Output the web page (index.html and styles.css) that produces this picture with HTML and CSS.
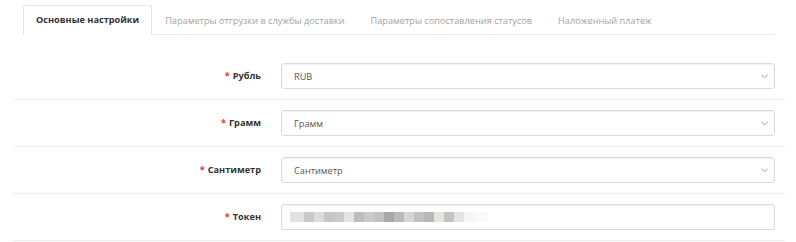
FILE: index.html
```html
<!DOCTYPE html>
<html lang="ru">
<head>
<meta charset="utf-8">
<title>Настройки</title>
<link rel="stylesheet" href="styles.css">
</head>
<body>
<div class="tabs">
  <div class="tab active">Основные настройки</div>
  <div class="tab">Параметры отгрузки в службы доставки</div>
  <div class="tab">Параметры сопоставления статусов</div>
  <div class="tab">Наложенный платеж</div>
</div>
<div class="form">
  <div class="row">
    <label class="label"><span class="req">*</span>Рубль</label>
    <div class="select"><span>RUB</span><svg class="chev" viewBox="0 0 8 5" width="7" height="5"><path d="M0.5 0.5 L4 4 L7.5 0.5" fill="none" stroke="#999" stroke-width="1.1"/></svg></div>
  </div>
  <div class="row">
    <label class="label"><span class="req">*</span>Грамм</label>
    <div class="select"><span>Грамм</span><svg class="chev" viewBox="0 0 8 5" width="7" height="5"><path d="M0.5 0.5 L4 4 L7.5 0.5" fill="none" stroke="#999" stroke-width="1.1"/></svg></div>
  </div>
  <div class="row">
    <label class="label"><span class="req">*</span>Сантиметр</label>
    <div class="select"><span>Сантиметр</span><svg class="chev" viewBox="0 0 8 5" width="7" height="5"><path d="M0.5 0.5 L4 4 L7.5 0.5" fill="none" stroke="#999" stroke-width="1.1"/></svg></div>
  </div>
  <div class="row">
    <label class="label"><span class="req">*</span>Токен</label>
    <div class="input">
      <div class="blur">
        <i class="b1"></i><i class="b2"></i><i class="b3"></i><i class="b4"></i><i class="b5"></i><i class="b6"></i><i class="b7"></i><i class="b8"></i><i class="b9"></i><i class="b10"></i><i class="b11"></i><i class="b12"></i><i class="b13"></i><i class="b14"></i><i class="b15"></i><i class="b16"></i><i class="b17"></i><i class="b18"></i><i class="b19"></i>
      </div>
    </div>
  </div>
</div>
</body>
</html>
```
FILE: styles.css
```css
html, body {
  margin: 0;
  padding: 0;
  background: #fff;
}
body {
  font-family: "Open Sans", "Liberation Sans", sans-serif;
  font-size: 9.2px;
  color: #333;
}
.tabs {
  display: flex;
  margin: 5px 21px 0 23px;
  border-bottom: 1px solid #e8e8e8;
  height: 29px;
}
.tab {
  padding: 0 12px;
  line-height: 29px;
  color: #a3a3a3;
  white-space: nowrap;
  border: 1px solid transparent;
  border-bottom: none;
  height: 29px;
  box-sizing: border-box;
}
.tab.active {
  color: #333;
  font-weight: 700;
  background: #fff;
  border-color: #e3e3e3;
  border-top-left-radius: 2px;
  border-top-right-radius: 2px;
  height: 30px;
  margin-bottom: -1px;
  line-height: 28px;
}
.form {
  margin: 18px 11px 0 13px;
}
.row {
  display: grid;
  grid-template-columns: 248px 494px;
  column-gap: 20px;
  padding: 10px 0;
  border-bottom: 1px solid #eeeeee;
}
.label {
  text-align: right;
  font-weight: 700;
  line-height: 26px;
  color: #333;
}
.req {
  color: #e8342a;
  margin-right: 3px;
}
.select, .input {
  height: 26px;
  box-sizing: border-box;
  border: 1px solid #d9d9d9;
  border-radius: 3px;
  box-shadow: inset 0 1px 1px rgba(0, 0, 0, 0.06);
  display: flex;
  align-items: center;
  justify-content: space-between;
  padding: 0 6px 0 12px;
  color: #555;
  background: #fff;
}
.chev {
  display: block;
}
.blur {
  display: flex;
  height: 10px;
  margin-left: -4px;
}
.blur i {
  display: block;
  width: 10px;
  height: 10px;
}
.b1 { background: #e2e2e4; width: 14px !important; }
.b2 { background: #c8c8ca; }
.b3 { background: #dcdcdc; }
.b4 { background: #c7c6c3; }
.b5 { background: #cbcac8; }
.b6 { background: #e4e4e0; }
.b7 { background: #bcbdc0; }
.b8 { background: #c8cbce; }
.b9 { background: #c0c2c4; }
.b10 { background: #aaa6a3; }
.b11 { background: #b8babd; }
.b12 { background: #d6d6d6; }
.b13 { background: #c3c2c3; }
.b14 { background: #b8b8b8; }
.b15 { background: #e6e4df; }
.b16 { background: #c3c3bf; }
.b17 { background: #e4e4e4; }
.b18 { background: #f6f6f6; }
.b19 { background: #fafafa; width: 14px !important; }
```
